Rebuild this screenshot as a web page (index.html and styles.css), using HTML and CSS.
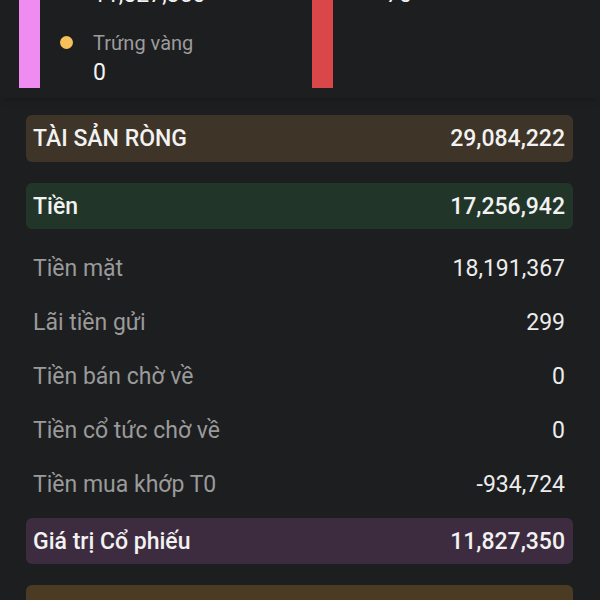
FILE: index.html
```html
<!DOCTYPE html>
<html lang="vi">
<head>
    <meta charset="UTF-8">
    <meta name="viewport" content="width=device-width, initial-scale=1.0">
    <title>Tài sản</title>
    <link rel="stylesheet" href="styles.css">
</head>
<body>
    <div class="screen">
        <!-- cơ cấu tài sản / nợ -->
        <section class="chart-card">
            <div class="chart-col">
                <div class="stack-bar">
                    <span class="seg seg-cash" style="flex: 17256942"></span>
                    <span class="seg seg-stock" style="flex: 11827350"></span>
                </div>
                <ul class="legend">
                    <li>
                        <span class="dot dot-cash"></span>
                        <div>
                            <p class="legend-label">Tiền</p>
                            <p class="legend-value">17,256,942</p>
                        </div>
                    </li>
                    <li>
                        <span class="dot dot-stock"></span>
                        <div>
                            <p class="legend-label">Cổ phiếu</p>
                            <p class="legend-value">11,827,350</p>
                        </div>
                    </li>
                    <li>
                        <span class="dot dot-gold"></span>
                        <div>
                            <p class="legend-label">Trứng vàng</p>
                            <p class="legend-value">0</p>
                        </div>
                    </li>
                </ul>
            </div>
            <div class="chart-col">
                <div class="stack-bar">
                    <span class="seg seg-debt" style="flex: 1"></span>
                </div>
                <ul class="legend">
                    <li>
                        <span class="dot dot-debt"></span>
                        <div>
                            <p class="legend-label">Nợ</p>
                            <p class="legend-value">0</p>
                        </div>
                    </li>
                    <li>
                        <span class="dot dot-ratio"></span>
                        <div>
                            <p class="legend-label">Tỷ lệ ký quỹ (%)</p>
                            <p class="legend-value">70</p>
                        </div>
                    </li>
                </ul>
            </div>
        </section>

        <section class="summary">
            <div class="head head-net">
                <span>TÀI SẢN RÒNG</span>
                <span>29,084,222</span>
            </div>

            <div class="group">
                <div class="head head-cash">
                    <span>Tiền</span>
                    <span>17,256,942</span>
                </div>
                <div class="rows">
                    <div class="row"><span class="row-label">Tiền mặt</span><span class="row-value">18,191,367</span></div>
                    <div class="row"><span class="row-label">Lãi tiền gửi</span><span class="row-value">299</span></div>
                    <div class="row"><span class="row-label">Tiền bán chờ về</span><span class="row-value">0</span></div>
                    <div class="row"><span class="row-label">Tiền cổ tức chờ về</span><span class="row-value">0</span></div>
                    <div class="row"><span class="row-label">Tiền mua khớp T0</span><span class="row-value">-934,724</span></div>
                </div>
            </div>

            <div class="head head-stock">
                <span>Giá trị Cổ phiếu</span>
                <span>11,827,350</span>
            </div>

            <div class="head head-gold">
                <span>Trứng vàng</span>
                <span>0</span>
            </div>
        </section>
    </div>
</body>
</html>
```

FILE: styles.css
```css
body {
    margin: 0;
    background: #1d1e20;
    font-family: Roboto, "Noto Sans", sans-serif;
    color: #eeeeee;
}
p {
    margin: 0;
}
/* trang đang cuộn xuống giữa */
.screen {
    margin-top: -144px;
}
.chart-card {
    display: grid;
    grid-template-columns: 293px 1fr;
    padding: 16px 0 10px 19px;
    box-shadow: 0 6px 8px -6px rgba(0, 0, 0, 0.35);
}
.chart-col {
    display: flex;
    align-items: stretch;
}
.stack-bar {
    width: 21px;
    display: flex;
    flex-direction: column;
}
.seg-cash {
    background-color: #3fc46a;
}
.seg-stock {
    background-color: #f08bf2;
}
.seg-debt {
    background-color: #d9474a;
}
.legend {
    list-style: none;
    margin: 0 0 0 20px;
    padding: 0;
}
.legend li {
    display: flex;
    margin-bottom: 18px;
}
.legend li:last-child {
    margin-bottom: 0;
}
.dot {
    width: 13px;
    height: 13px;
    border-radius: 50%;
    margin: 8px 20px 0 0;
    flex-shrink: 0;
}
.dot-cash {
    background-color: #3fc46a;
}
.dot-stock {
    background-color: #f08bf2;
}
.dot-gold {
    background-color: #f6c15b;
}
.dot-debt {
    background-color: #d9474a;
}
.dot-ratio {
    background-color: #5b8ff6;
}
.legend-label {
    font-size: 20px;
    line-height: 30px;
    color: #9c9c9c;
}
.legend-value {
    font-size: 23px;
    line-height: 30px;
    color: #f2f2f2;
}
.summary {
    padding: 17px 27px 0 26px;
}
.head {
    display: flex;
    justify-content: space-between;
    align-items: center;
    height: 46px;
    padding: 0 8px 0 7px;
    border-radius: 6px;
    font-size: 23px;
    font-weight: 500;
    color: #f2f2f2;
}
.head-net {
    height: 47px;
    background-color: #3e3427;
    margin-bottom: 21px;
}
.head-cash {
    background-color: #213628;
}
.head-stock {
    background-color: #3d2c3f;
    margin-top: 7px;
}
.head-gold {
    height: 60px;
    background-color: #4a3b22;
    margin-top: 21px;
}
.rows {
    padding-top: 12px;
}
.row {
    display: flex;
    justify-content: space-between;
    align-items: center;
    height: 54px;
    padding: 0 8px 0 7px;
    font-size: 23px;
}
.row-label {
    color: #9a9a9a;
}
.row-value {
    color: #ececec;
}
```
